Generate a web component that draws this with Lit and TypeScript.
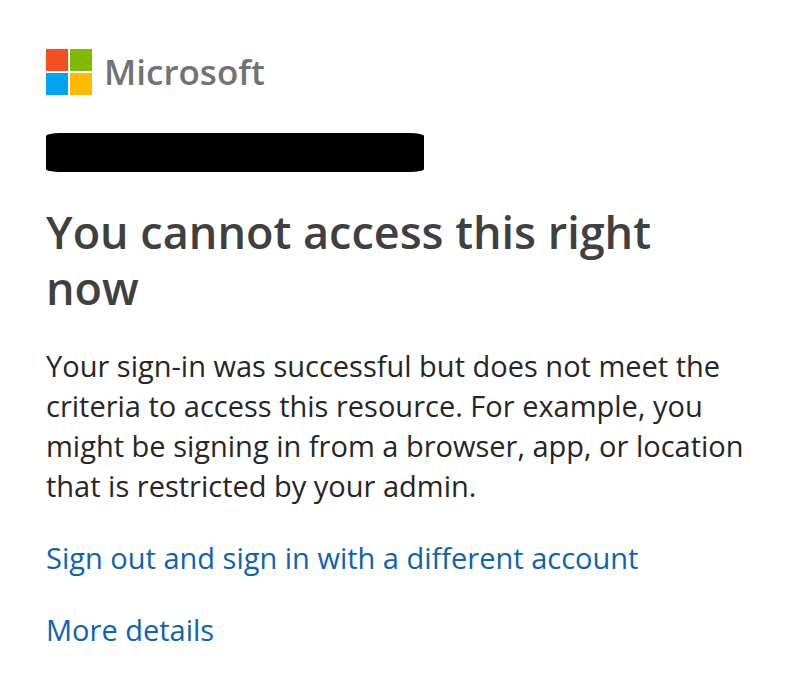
import { LitElement, html, css } from "lit";
import { customElement } from "lit/decorators.js";

@customElement("brand-logo")
export class BrandLogo extends LitElement {
  static styles = css`
    :host {
      display: flex;
      align-items: center;
      gap: 12px;
    }
    .mark {
      display: block;
      width: 46px;
      height: 46px;
      flex: none;
    }
    .name {
      font-size: 35px;
      line-height: 46px;
      font-weight: 600;
      color: #737373;
    }
  `;

  render() {
    return html`
      <svg class="mark" viewBox="0 0 46 46" aria-hidden="true">
        <rect width="22" height="22" fill="#f25022" />
        <rect x="24" width="22" height="22" fill="#7fba00" />
        <rect y="24" width="22" height="22" fill="#00a4ef" />
        <rect x="24" y="24" width="22" height="22" fill="#ffb900" />
      </svg>
      <span class="name">Microsoft</span>
    `;
  }
}

@customElement("app-root")
export class AppRoot extends LitElement {
  static styles = css`
    :host {
      display: block;
      box-sizing: border-box;
      min-height: 100vh;
      padding: 49px 40px 32px 46px;
      background: #ffffff;
      color: #262626;
      font-family: "Segoe UI", "Open Sans", "Noto Sans", sans-serif;
      font-size: 29px;
      line-height: 40px;
    }
    .identity {
      width: 378px;
      max-width: 100%;
      height: 39px;
      margin-top: 38px;
      border-radius: 14px / 3px;
      background: #000000;
    }
    .title {
      margin: 32px 0 30px;
      font-size: 45px;
      line-height: 56px;
      font-weight: 600;
      color: #404040;
    }
    .message {
      margin: 0;
    }
    .actions {
      display: flex;
      flex-direction: column;
      align-items: flex-start;
      gap: 32px;
      margin-top: 32px;
    }
    .link {
      color: #0f62b0;
      text-decoration: none;
    }
    .link:hover {
      text-decoration: underline;
    }
  `;

  render() {
    return html`
      <main>
        <brand-logo></brand-logo>
        <div class="identity"></div>
        <h1 class="title">You cannot access this right now</h1>
        <p class="message">
          Your sign-in was successful but does not meet the criteria to access
          this resource. For example, you might be signing in from a browser,
          app, or location that is restricted by your admin.
        </p>
        <nav class="actions">
          <a class="link" href="#sign-out">Sign out and sign in with a different account</a>
          <a class="link" href="#details">More details</a>
        </nav>
      </main>
    `;
  }
}
